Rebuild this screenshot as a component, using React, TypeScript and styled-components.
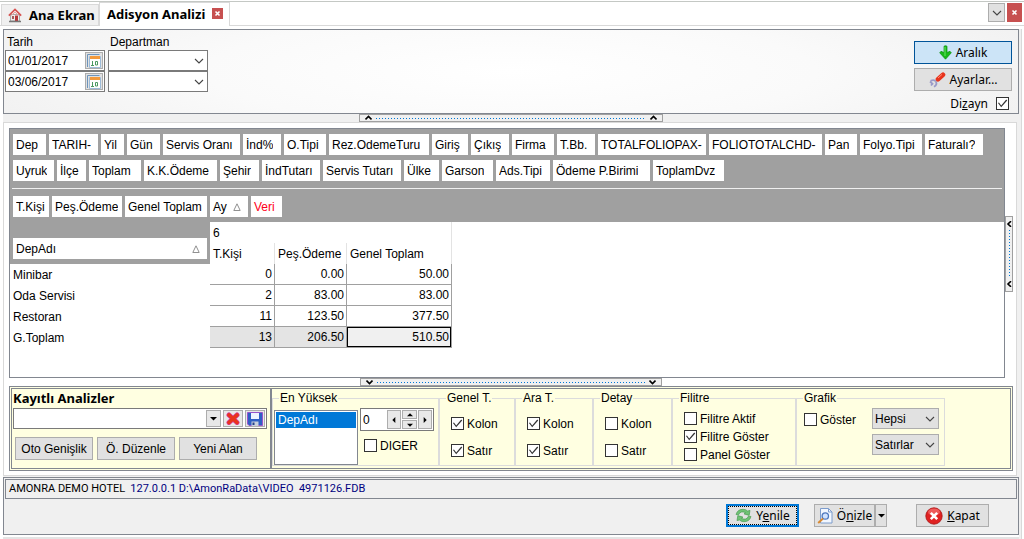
import React from "react";
import styled, { createGlobalStyle, css } from "styled-components";

const frame = "#828790";
const soft = "#d9d9d9";
const face = "#f0f0f0";
const ui = '"Liberation Sans", Arial, sans-serif';
const humanist = '"Noto Sans", "Open Sans", sans-serif';

const Global = createGlobalStyle`
  *, *::before, *::after { box-sizing: border-box; }
  body { margin: 0; background: #fff; color: #000; font: 12px/16px ${ui}; }
  button, input, select { font: inherit; color: inherit; border-radius: 0; margin: 0; padding: 0; }
`;

const Window = styled.div`
  display: flex;
  flex-direction: column;
  min-height: 100vh;
  border-top: 1px solid #fff;
`;

/* ---------- tabs ---------- */
const TabBar = styled.nav`
  display: flex;
  align-items: flex-end;
  height: 25px;
  border-top: 1px solid #c4c8c4;
  border-bottom: 1px solid ${soft};
  padding-left: 1px;
`;
const Tab = styled.button<{ $active?: boolean }>`
  display: flex;
  align-items: center;
  gap: 7px;
  font: bold 13px/16px ${humanist};
  white-space: nowrap;
  border: 1px solid ${soft};
  border-bottom: 0;
  height: ${(p) => (p.$active ? "24px" : "21px")};
  width: ${(p) => (p.$active ? "131px" : "98px")};
  padding: ${(p) => (p.$active ? "0 0 2px 7px" : "0 0 0 6px")};
  margin-bottom: ${(p) => (p.$active ? "-1px" : "0")};
  background: ${(p) => (p.$active ? "#fff" : face)};
`;
const Cross = styled.span`
  display: grid;
  place-items: center;
  width: 11px;
  height: 11px;
  background: #c75050;
`;
const TabTools = styled.div`
  display: flex;
  gap: 2px;
  margin-left: auto;
  padding: 0 2px 3px 0;
`;
const TabTool = styled.button<{ $red?: boolean }>`
  display: grid;
  place-items: center;
  height: 19px;
  width: ${(p) => (p.$red ? "15px" : "17px")};
  border: 1px solid ${(p) => (p.$red ? "#c75050" : "#adadad")};
  background: ${(p) => (p.$red ? "#c75050" : "#e1e1e1")};
`;

/* ---------- body ---------- */
const Body = styled.main`
  flex: 1;
  display: flex;
  flex-direction: column;
  margin: 3px 2px 0 3px;
  padding-right: 2px;
  border-right: 1px solid ${soft};
  background: #f0f0f0;
`;
const FilterPanel = styled.section`
  display: flex;
  justify-content: space-between;
  height: 85px;
  padding: 4px 6px 0 1px;
  border: 1px solid ${frame};
  background: radial-gradient(ellipse 60% 130% at 50% 50%, #fff 0%, #fafafa 50%, #f0f0f0 100%);
`;
const Filters = styled.div`
  display: flex;
  gap: 3px;
`;
const FilterColumn = styled.div`
  width: 100px;
`;
const FilterLabel = styled.label`
  display: block;
  padding-left: 2px;
`;
const DateBox = styled.div`
  display: flex;
  align-items: center;
  height: 21px;
  border: 1px solid #7a7a7a;
  background: #fff;
  padding-left: 2px;
`;
const PlainInput = styled.input`
  flex: 1;
  min-width: 0;
  width: 100%;
  border: 0;
  background: transparent;
  outline: 0;
`;
const CalendarButton = styled.button`
  display: grid;
  place-items: center;
  width: 18px;
  height: 17px;
  border: 1px solid #adadad;
  background: #e1e1e1;
  margin-right: 1px;
`;
const SelectBox = styled.div<{ $grey?: boolean }>`
  display: grid;
  align-items: center;
  height: 21px;
  border: 1px solid ${(p) => (p.$grey ? "#adadad" : "#7a7a7a")};
  background: ${(p) => (p.$grey ? "#e1e1e1" : "#fff")};
  > * { grid-area: 1 / 1; }
  > svg { justify-self: end; margin-right: 3px; pointer-events: none; }
`;
const Select = styled.select`
  appearance: none;
  border: 0;
  background: transparent;
  width: 100%;
  height: 19px;
  padding-left: 2px;
`;
const Actions = styled.div`
  display: flex;
  flex-direction: column;
  gap: 4px;
  width: 98px;
  padding-top: 7px;
`;
const Button = styled.button<{ $kind?: "hot" | "default"; $width?: number; $human?: boolean }>`
  display: flex;
  align-items: center;
  justify-content: center;
  gap: 4px;
  flex: none;
  height: 23px;
  width: ${(p) => (p.$width ? `${p.$width}px` : "auto")};
  border: 1px solid #adadad;
  background: #e1e1e1;
  white-space: nowrap;
  ${(p) => p.$human && css`font-family: ${humanist};`}
  ${(p) => p.$kind === "hot" && css`border-color: #005499; background: #cce4f7;`}
  ${(p) =>
    p.$kind === "default" &&
    css`
      border: 2px solid #0078d7;
      outline: 1px dotted #000;
      outline-offset: -3px;
    `}
`;

/* ---------- check boxes ---------- */
const CheckLabel = styled.label<{ $end?: boolean }>`
  display: flex;
  align-items: center;
  gap: 3px;
  height: 13px;
  white-space: nowrap;
  ${(p) => p.$end && css`
    gap: 8px;
    justify-content: flex-end;
    padding-right: 3px;
    margin-top: 2px;
    font-family: ${humanist};
  `}
`;
const CheckInput = styled.input.attrs({ type: "checkbox" })`
  appearance: none;
  flex: none;
  display: grid;
  width: 13px;
  height: 13px;
  border: 1px solid #333;
  background: #fff;
  &:checked::before {
    content: "";
    background: #333;
    clip-path: polygon(9% 45%, 18% 42%, 38% 68%, 84% 14%, 93% 22%, 38% 84%);
  }
`;
const Check = ({ text, on }: { text: string; on?: boolean }) => (
  <CheckLabel>
    <CheckInput defaultChecked={on} />
    {text}
  </CheckLabel>
);

/* ---------- splitter handles ---------- */
const Splitter = styled.div`
  display: flex;
  align-items: center;
  gap: 4px;
  width: 30%;
  height: 8px;
  margin: 0 auto;
  padding: 0 5px;
  border: 1px solid #a0a0a0;
  background: ${face};
`;
const SideSplitter = styled.div`
  display: flex;
  flex-direction: column;
  align-items: center;
  align-self: center;
  gap: 3px;
  width: 8px;
  height: 76px;
  margin-top: 2px;
  padding: 4px 0;
  border: 1px solid #a0a0a0;
  background: ${face};
`;
const Dots = styled.i<{ $vertical?: boolean }>`
  flex: 1;
  ${(p) =>
    p.$vertical
      ? css`width: 1px; background: repeating-linear-gradient(#0078d7 0 1px, transparent 1px 3px);`
      : css`height: 1px; background: repeating-linear-gradient(90deg, #0078d7 0 1px, transparent 1px 3px);`}
`;

/* ---------- pivot ---------- */
const Sheet = styled.section`
  flex: 1;
  display: flex;
  flex-direction: column;
  margin-right: 2px;
  padding: 5px 3px 4px 5px;
  border: 1px solid ${soft};
  background: #fff;
`;
const PivotRow = styled.div`
  flex: 1;
  display: flex;
`;
const Pivot = styled.div`
  flex: 1;
  min-width: 0;
  border: 1px solid ${frame};
`;
const FieldArea = styled.div`
  background: #a0a0a0;
  padding: 5px 2px;
`;
const ChipRow = styled.div`
  display: flex;
  gap: 3px;
  padding-left: 1px;
  & + & { margin-top: 5px; }
`;
const Rule = styled.hr`
  height: 1px;
  border: 0;
  margin: 7px 0;
  background: #f0f0f0;
`;
const Chip = styled.button<{ $width: number; $red?: boolean }>`
  display: flex;
  justify-content: space-between;
  align-items: center;
  flex: none;
  width: ${(p) => p.$width}px;
  height: 21px;
  padding: 0 7px 0 3px;
  border: 0;
  background: #fff;
  color: ${(p) => (p.$red ? "#ff0020" : "#000")};
  text-align: left;
  white-space: nowrap;
  overflow: hidden;
`;
const ChipText = styled.span`
  overflow: hidden;
  margin-right: -6px;
`;
const Grid = styled.table`
  table-layout: fixed;
  width: 442px;
  border-collapse: separate;
  border-spacing: 0;
  th, td { height: 21px; padding: 0 3px; line-height: 16px; font-weight: normal; text-align: left; white-space: nowrap; }
`;
const DepCell = styled.th`
  background: #a0a0a0;
  && { padding: 11px 3px 0 3px; }
`;
const ColHead = styled.th`
  border-right: 1px solid #e3e3e3;
`;
const Value = styled.td<{ $total?: boolean; $focus?: boolean }>`
  border-right: 1px solid #a0a0a0;
  border-bottom: 1px solid #a0a0a0;
  background: ${(p) => (p.$focus ? "#f0f0f0" : p.$total ? "#e4e4e4" : "#fff")};
  ${(p) => p.$focus && css`box-shadow: inset 0 0 0 1px #000;`}
  && { text-align: right; padding-right: 2px; }
`;

/* ---------- analysis options ---------- */
const Options = styled.section`
  display: flex;
  min-height: 85px;
  padding: 1px;
  border: 1px solid ${frame};
  background: #ffffe1;
`;
const Saved = styled.div`
  width: 260px;
  padding: 0 3px 0 1px;
  border: 1px solid ${frame};
`;
const SavedTitle = styled.h2`
  margin: 0 0 1px;
  font: bold 13px/18px ${humanist};
`;
const SavedCombo = styled.div`
  display: flex;
  align-items: center;
  gap: 2px;
  height: 21px;
  padding: 0 1px 0 2px;
  border: 1px solid #7a7a7a;
  background: #fff;
`;
const Tiny = styled.button<{ $width: number; $height: number }>`
  display: grid;
  place-items: center;
  flex: none;
  width: ${(p) => p.$width}px;
  height: ${(p) => p.$height}px;
  border: 1px solid #adadad;
  background: #e8e8e8;
`;
const SavedButtons = styled.div`
  display: flex;
  gap: 4px;
  padding: 8px 2px 0 2px;
`;
const Groups = styled.div`
  flex: 1;
  display: flex;
  padding-top: 1px;
  border: 1px solid ${frame};
`;
const Group = styled.fieldset<{ $width: number }>`
  flex: none;
  width: ${(p) => p.$width}px;
  height: 76px;
  min-width: 0;
  margin: 0;
  padding: 0;
  border: 1px solid #dcdcdc;
`;
const Legend = styled.legend`
  margin-left: 6px;
  padding: 0 1px;
  line-height: 16px;
`;
const Stack = styled.div<{ $top: number; $gap: number; $left: number }>`
  display: flex;
  flex-direction: column;
  gap: ${(p) => p.$gap}px;
  padding: ${(p) => p.$top}px 0 0 ${(p) => p.$left}px;
`;
const Split = styled.div`
  display: flex;
  gap: 2px;
  padding-left: 1px;
`;
const ListBox = styled.ul`
  width: 84px;
  height: 55px;
  margin: 4px 0 0;
  padding: 1px;
  border: 1px solid ${frame};
  background: #fff;
  list-style: none;
`;
const ListItem = styled.li`
  padding-left: 2px;
  background: #0078d7;
  color: #fff;
`;
const Spinner = styled.div`
  display: flex;
  align-items: center;
  gap: 1px;
  width: 74px;
  height: 23px;
  padding: 0 1px 0 2px;
  border: 1px solid #7a7a7a;
  background: #fff;
`;
const SpinColumn = styled.div`
  display: grid;
  gap: 1px;
`;
const ChartBox = styled.div`
  display: flex;
  justify-content: space-between;
  padding: 2px 5px 0 7px;
`;
const ChartSelects = styled.div`
  display: grid;
  gap: 5px;
  width: 67px;
`;

/* ---------- footer ---------- */
const Footer = styled.footer`
  height: 58px;
  margin-top: 1px;
  padding: 1px;
  border: 1px solid ${frame};
`;
const Status = styled.div`
  display: flex;
  align-items: center;
  gap: 5px;
  height: 20px;
  padding-left: 3px;
  border: 1px solid ${frame};
  font: 11px/16px Roboto, "Liberation Sans", sans-serif;
  white-space: pre;
`;
const Path = styled.span`
  color: #000080;
`;
const FooterButtons = styled.div`
  display: flex;
  justify-content: flex-end;
  padding: 5px 28px 0 0;
`;
const SplitButton = styled.div`
  display: flex;
  margin: 0 29px 0 15px;
`;
const Edge = styled.div`
  height: 4px;
  padding-top: 2px;
  background: #fff;
  &::after { content: ""; display: block; height: 2px; background: #e4e4e4; }
`;

/* ---------- icons ---------- */
const Chevron = () => (
  <svg width="10" height="6" viewBox="0 0 10 6" fill="none" stroke="#444" strokeWidth="1.1">
    <path d="M1 1l4 4 4-4" />
  </svg>
);
const SmallX = () => (
  <svg width="7" height="7" viewBox="0 0 7 7" stroke="#fff" strokeWidth="1.6">
    <path d="M1.5 1.5l4 4M5.5 1.5l-4 4" />
  </svg>
);
const SplitArrow = ({ d }: { d: string }) => (
  <svg width="7" height="6" viewBox="0 0 7 6" fill="none" stroke="#000" strokeWidth="1.6">
    <path d={d} />
  </svg>
);
const up = "M.5 4.5l3-3 3 3";
const down = "M.5 1.5l3 3 3-3";
const left = "M5 .2L2 3l3 2.8";
const Triangle = ({ d, size = 7 }: { d: string; size?: number }) => (
  <svg width={size} height={size} viewBox="0 0 7 7">
    <path d={d} />
  </svg>
);
const SortMark = () => (
  <svg width="8" height="8" viewBox="0 0 8 8" fill="none" stroke="#909090">
    <path d="M4 .8L.8 7.5h6.4z" />
  </svg>
);
const House = () => (
  <svg width="14" height="15" viewBox="0 0 14 15">
    <path d="M2.5 6.5h9v6.5h-9z" fill="#eee" stroke="#999" strokeWidth=".8" />
    <path d="M.8 7.6L7 1.4l6.2 6.2" fill="none" stroke="#d6504e" strokeWidth="1.5" />
    <path d="M3.5 7.5L7 4l3.500 3.500" fill="none" stroke="#e9a09e" />
    <path d="M4 8h2v3H4z" fill="#a85a5a" />
    <path d="M7 7.500h3V13H7z" fill="#b8383a" />
    <path d="M1 13.500h12" stroke="#777" strokeWidth="1.500" />
  </svg>
);
const Calendar = () => (
  <svg width="14" height="14" viewBox="0 0 14 14">
    <path d="M.5 13V.5h12" fill="none" stroke="#6d94bb" />
    <path d="M2.500 2.500h11v11h-11z" fill="#fff" stroke="#9dbbd8" />
    <path d="M3 2h10v3H3z" fill="#f39a3c" />
    <path d="M5.500 7v4M4 11.500h3M8.500 7.500h2v3.500h-2z" fill="none" stroke="#4c9a62" />
  </svg>
);
const ArrowDown = () => (
  <svg width="13" height="15" viewBox="0 0 13 15">
    <path d="M5 1.200q1.500-1 3 0v6.300l3-1.200 1.300 1.500-5.800 6.400L.7 7.800 2 6.300l3 1.200z" fill="#19b919" stroke="#0c8f10" strokeWidth=".7" />
    <path d="M6 2v9" stroke="#6be36b" />
  </svg>
);
const Wrench = () => (
  <svg width="17" height="16" viewBox="0 0 17 16">
    <path d="M1.500 8.800q4-1.800 5.500 1t-2 5M1 9.500l2.500 2.300-1.500 1.700" fill="none" stroke="#9a9ac8" strokeWidth="1.800" />
    <path d="M6.500 10l2-2.500" stroke="#a8a8c0" strokeWidth="2" />
    <path d="M9 7.300L14 2.800" stroke="#e8341c" strokeWidth="4.600" strokeLinecap="round" />
    <path d="M9 6l4-3.600" stroke="#ff8d78" strokeWidth="1" />
  </svg>
);
const Delete = () => (
  <svg width="14" height="13" viewBox="0 0 14 13">
    <path d="M3 3l8 7.500M11 3l-8 7.500" stroke="#d63a9c" strokeWidth="5" strokeLinecap="round" />
    <path d="M3 3l8 7.500M11 3l-8 7.500" stroke="#e8341c" strokeWidth="3.600" strokeLinecap="round" />
  </svg>
);
const Disk = () => (
  <svg width="16" height="14" viewBox="0 0 16 14">
    <path d="M.5.5h15v13H2L.5 12z" fill="#2f5fc4" stroke="#9a40c8" strokeWidth=".8" />
    <path d="M4 1h8v6H4z" fill="#eef4ff" />
    <path d="M4.500 9.500h7V14h-7z" fill="#c8d0dc" />
    <path d="M5.500 10.500h2V13h-2z" fill="#24408c" />
  </svg>
);
const Refresh = () => (
  <svg width="17" height="15" viewBox="0 0 17 15" stroke="#3f9448" strokeWidth=".6" fill="#6fc274">
    <path d="M1 6.500Q2.500 1.300 8 1.300q3 0 4.500 1.700l2.500-.6-.8 5-5.200-1.500 1.600-1.200Q8.500 3.600 6.500 4 4.300 4.500 3.600 6.800z" />
    <path d="M16 8.500q-1.500 5.200-7 5.200-3 0-4.500-1.700l-2.500.6.8-5L8 9.100l-1.600 1.200q2.100 1.100 4.100.7 2.200-.5 2.900-2.800z" />
  </svg>
);
const Preview = () => (
  <svg width="16" height="16" viewBox="0 0 16 16">
    <path d="M3.500.5h8l3.500 3.500v11h-11.500z" fill="#f2f7ff" stroke="#7d9ccc" />
    <path d="M11.500.5V4H15" fill="none" stroke="#7d9ccc" />
    <circle cx="8.300" cy="8" r="3.200" fill="#cfe2ff" stroke="#4f78bd" strokeWidth="1.300" />
    <path d="M6 10.500L1.200 15" stroke="#d98a32" strokeWidth="2" />
  </svg>
);
const CloseBall = () => (
  <svg width="18" height="18" viewBox="0 0 18 18">
    <circle cx="9" cy="9" r="8.200" fill="#e02222" stroke="#a81414" strokeWidth=".8" />
    <ellipse cx="9" cy="5" rx="6" ry="3.600" fill="#f47070" opacity=".7" />
    <path d="M5.800 5.800l6.400 6.400M12.200 5.800l-6.400 6.400" stroke="#fff" strokeWidth="2.600" />
  </svg>
);

/* ---------- data ---------- */
type Field = [string, number];
const fieldRows: Field[][] = [
  [
    ["Dep", 33], ["TARIH-", 49], ["Yil", 23], ["Gün", 33], ["Servis Oranı", 77], ["İnd%", 38],
    ["O.Tipi", 42], ["Rez.OdemeTuru", 100], ["Giriş", 36], ["Çıkış", 38], ["Firma", 42], ["T.Bb.", 38],
    ["TOTALFOLIOPAX-", 108], ["FOLIOTOTALCHD-", 113], ["Pan", 32], ["Folyo.Tipi", 62], ["Faturalı?", 58],
  ],
  [
    ["Uyruk", 41], ["İlçe", 29], ["Toplam", 52], ["K.K.Ödeme", 73], ["Şehir", 39], ["İndTutarı", 58],
    ["Servis Tutarı", 78], ["Ülke", 35], ["Garson", 51], ["Ads.Tipi", 54], ["Ödeme P.Birimi", 97], ["ToplamDvz", 71],
  ],
];
const dataFields: Field[] = [["T.Kişi", 36], ["Peş.Ödeme", 70], ["Genel Toplam", 82]];
const rows = [
  ["Minibar", "0", "0.00", "50.00"],
  ["Oda Servisi", "2", "83.00", "83.00"],
  ["Restoran", "11", "123.50", "377.50"],
  ["G.Toplam", "13", "206.50", "510.50"],
];
const totals = [
  { name: "Genel T.", width: 76, on: true },
  { name: "Ara T.", width: 78, on: true },
  { name: "Detay", width: 79, on: false },
];

const DateField = ({ id, value }: { id: string; value: string }) => (
  <DateBox>
    <PlainInput id={id} aria-label="Tarih" defaultValue={value} />
    <CalendarButton aria-label="Takvim"><Calendar /></CalendarButton>
  </DateBox>
);
const Drop = ({ id, label, value, grey }: { id?: string; label: string; value?: string; grey?: boolean }) => (
  <SelectBox $grey={grey}>
    <Select id={id} aria-label={label}>
      <option>{value}</option>
    </Select>
    <Chevron />
  </SelectBox>
);
const FieldChip = ({ field }: { field: Field }) => (
  <Chip $width={field[1]}><ChipText>{field[0]}</ChipText></Chip>
);

export default function App() {
  return (
    <>
      <Global />
      <Window>
        <TabBar>
          <Tab><House />Ana Ekran</Tab>
          <Tab $active>Adisyon Analizi<Cross><SmallX /></Cross></Tab>
          <TabTools>
            <TabTool aria-label="Sekmeler"><Chevron /></TabTool>
            <TabTool $red aria-label="Sekmeyi kapat"><SmallX /></TabTool>
          </TabTools>
        </TabBar>
        <Body>
          <FilterPanel>
            <Filters>
              <FilterColumn>
                <FilterLabel htmlFor="from">Tarih</FilterLabel>
                <DateField id="from" value="01/01/2017" />
                <DateField id="to" value="03/06/2017" />
              </FilterColumn>
              <FilterColumn>
                <FilterLabel htmlFor="dep1">Departman</FilterLabel>
                <Drop id="dep1" label="Departman" />
                <Drop id="dep2" label="Departman" />
              </FilterColumn>
            </Filters>
            <Actions>
              <Button $kind="hot" $human><ArrowDown />Aralık</Button>
              <Button $human><Wrench />Ayarlar…</Button>
              <CheckLabel $end>
                <span>Di<u>z</u>ayn</span>
                <CheckInput defaultChecked />
              </CheckLabel>
            </Actions>
          </FilterPanel>
          <Splitter><SplitArrow d={up} /><Dots /><SplitArrow d={up} /></Splitter>
          <Sheet>
            <PivotRow>
              <Pivot>
                <FieldArea>
                  {fieldRows.map((row, i) => (
                    <ChipRow key={i}>{row.map((f) => <FieldChip key={f[0]} field={f} />)}</ChipRow>
                  ))}
                  <Rule />
                  <ChipRow>
                    {dataFields.map((f) => <FieldChip key={f[0]} field={f} />)}
                    <Chip $width={38}>Ay<SortMark /></Chip>
                    <Chip $width={31} $red>Veri</Chip>
                  </ChipRow>
                </FieldArea>
                <Grid>
                  <colgroup>
                    <col width="200" /><col width="65" /><col width="72" /><col width="105" />
                  </colgroup>
                  <thead>
                    <tr>
                      <DepCell rowSpan={2}><Chip $width={194}>DepAdı<SortMark /></Chip></DepCell>
                      <ColHead colSpan={3}>6</ColHead>
                    </tr>
                    <tr>
                      <ColHead>T.Kişi</ColHead><ColHead>Peş.Ödeme</ColHead><ColHead>Genel Toplam</ColHead>
                    </tr>
                  </thead>
                  <tbody>
                    {rows.map(([name, ...values], r) => (
                      <tr key={name}>
                        <th scope="row">{name}</th>
                        {values.map((v, c) => (
                          <Value key={c} $total={r === 3} $focus={r === 3 && c === 2}>{v}</Value>
                        ))}
                      </tr>
                    ))}
                  </tbody>
                </Grid>
              </Pivot>
              <SideSplitter><SplitArrow d={left} /><Dots $vertical /><SplitArrow d={left} /></SideSplitter>
            </PivotRow>
            <Splitter><SplitArrow d={down} /><Dots /><SplitArrow d={down} /></Splitter>
            <Options>
              <Saved>
                <SavedTitle>Kayıtlı Analizler</SavedTitle>
                <SavedCombo>
                  <PlainInput aria-label="Kayıtlı Analizler" />
                  <Tiny $width={15} $height={17} aria-label="Aç"><Triangle d="M0 2h7L3.500 5.500z" /></Tiny>
                  <Tiny $width={20} $height={17} aria-label="Sil"><Delete /></Tiny>
                  <Tiny $width={20} $height={17} aria-label="Kaydet"><Disk /></Tiny>
                </SavedCombo>
                <SavedButtons>
                  <Button $width={78}>Oto Genişlik</Button>
                  <Button $width={78}>Ö. Düzenle</Button>
                  <Button $width={78}>Yeni Alan</Button>
                </SavedButtons>
              </Saved>
              <Groups>
                <Group $width={167}>
                  <Legend>En Yüksek</Legend>
                  <Split>
                    <ListBox><ListItem>DepAdı</ListItem></ListBox>
                    <Stack $top={2} $gap={8} $left={0}>
                      <Spinner>
                        <PlainInput aria-label="En Yüksek" defaultValue="0" />
                        <Tiny $width={14} $height={19} aria-label="Sol"><Triangle size={6} d="M5 0v7L1.500 3.500z" /></Tiny>
                        <SpinColumn>
                          <Tiny $width={15} $height={9} aria-label="Artır"><Triangle size={6} d="M0 5h7L3.500 1.500z" /></Tiny>
                          <Tiny $width={15} $height={9} aria-label="Azalt"><Triangle size={6} d="M0 2h7L3.500 5.500z" /></Tiny>
                        </SpinColumn>
                        <Tiny $width={14} $height={19} aria-label="Sağ"><Triangle size={6} d="M2 0v7l3.500-3.500z" /></Tiny>
                      </Spinner>
                      <Stack $top={0} $gap={0} $left={4}><Check text="DIGER" /></Stack>
                    </Stack>
                  </Split>
                </Group>
                {totals.map((t) => (
                  <Group key={t.name} $width={t.width}>
                    <Legend>{t.name}</Legend>
                    <Stack $top={11} $gap={14} $left={11}>
                      <Check text="Kolon" on={t.on} />
                      <Check text="Satır" on={t.on} />
                    </Stack>
                  </Group>
                ))}
                <Group $width={124}>
                  <Legend>Filitre</Legend>
                  <Stack $top={6} $gap={5} $left={11}>
                    <Check text="Filitre Aktif" />
                    <Check text="Filitre Göster" on />
                    <Check text="Panel Göster" />
                  </Stack>
                </Group>
                <Group $width={149}>
                  <Legend>Grafik</Legend>
                  <ChartBox>
                    <Stack $top={5} $gap={0} $left={0}><Check text="Göster" /></Stack>
                    <ChartSelects>
                      <Drop label="Seri" value="Hepsi" grey />
                      <Drop label="Yön" value="Satırlar" grey />
                    </ChartSelects>
                  </ChartBox>
                </Group>
              </Groups>
            </Options>
          </Sheet>
          <Footer>
            <Status>
              <span>AMONRA DEMO HOTEL</span>
              <Path>{"127.0.0.1 D:\\AmonRaData\\VIDEO  4971126.FDB"}</Path>
            </Status>
            <FooterButtons>
              <Button $kind="default" $width={73} $human><Refresh /><span>Y<u>e</u>nile</span></Button>
              <SplitButton>
                <Button $width={61} $human><Preview /><span>Ö<u>n</u>izle</span></Button>
                <Button $width={12} aria-label="Önizle seçenekleri"><Triangle d="M0 2h7L3.500 5.500z" /></Button>
              </SplitButton>
              <Button $width={73} $human><CloseBall /><span><u>K</u>apat</span></Button>
            </FooterButtons>
          </Footer>
          <Edge />
        </Body>
      </Window>
    </>
  );
}
